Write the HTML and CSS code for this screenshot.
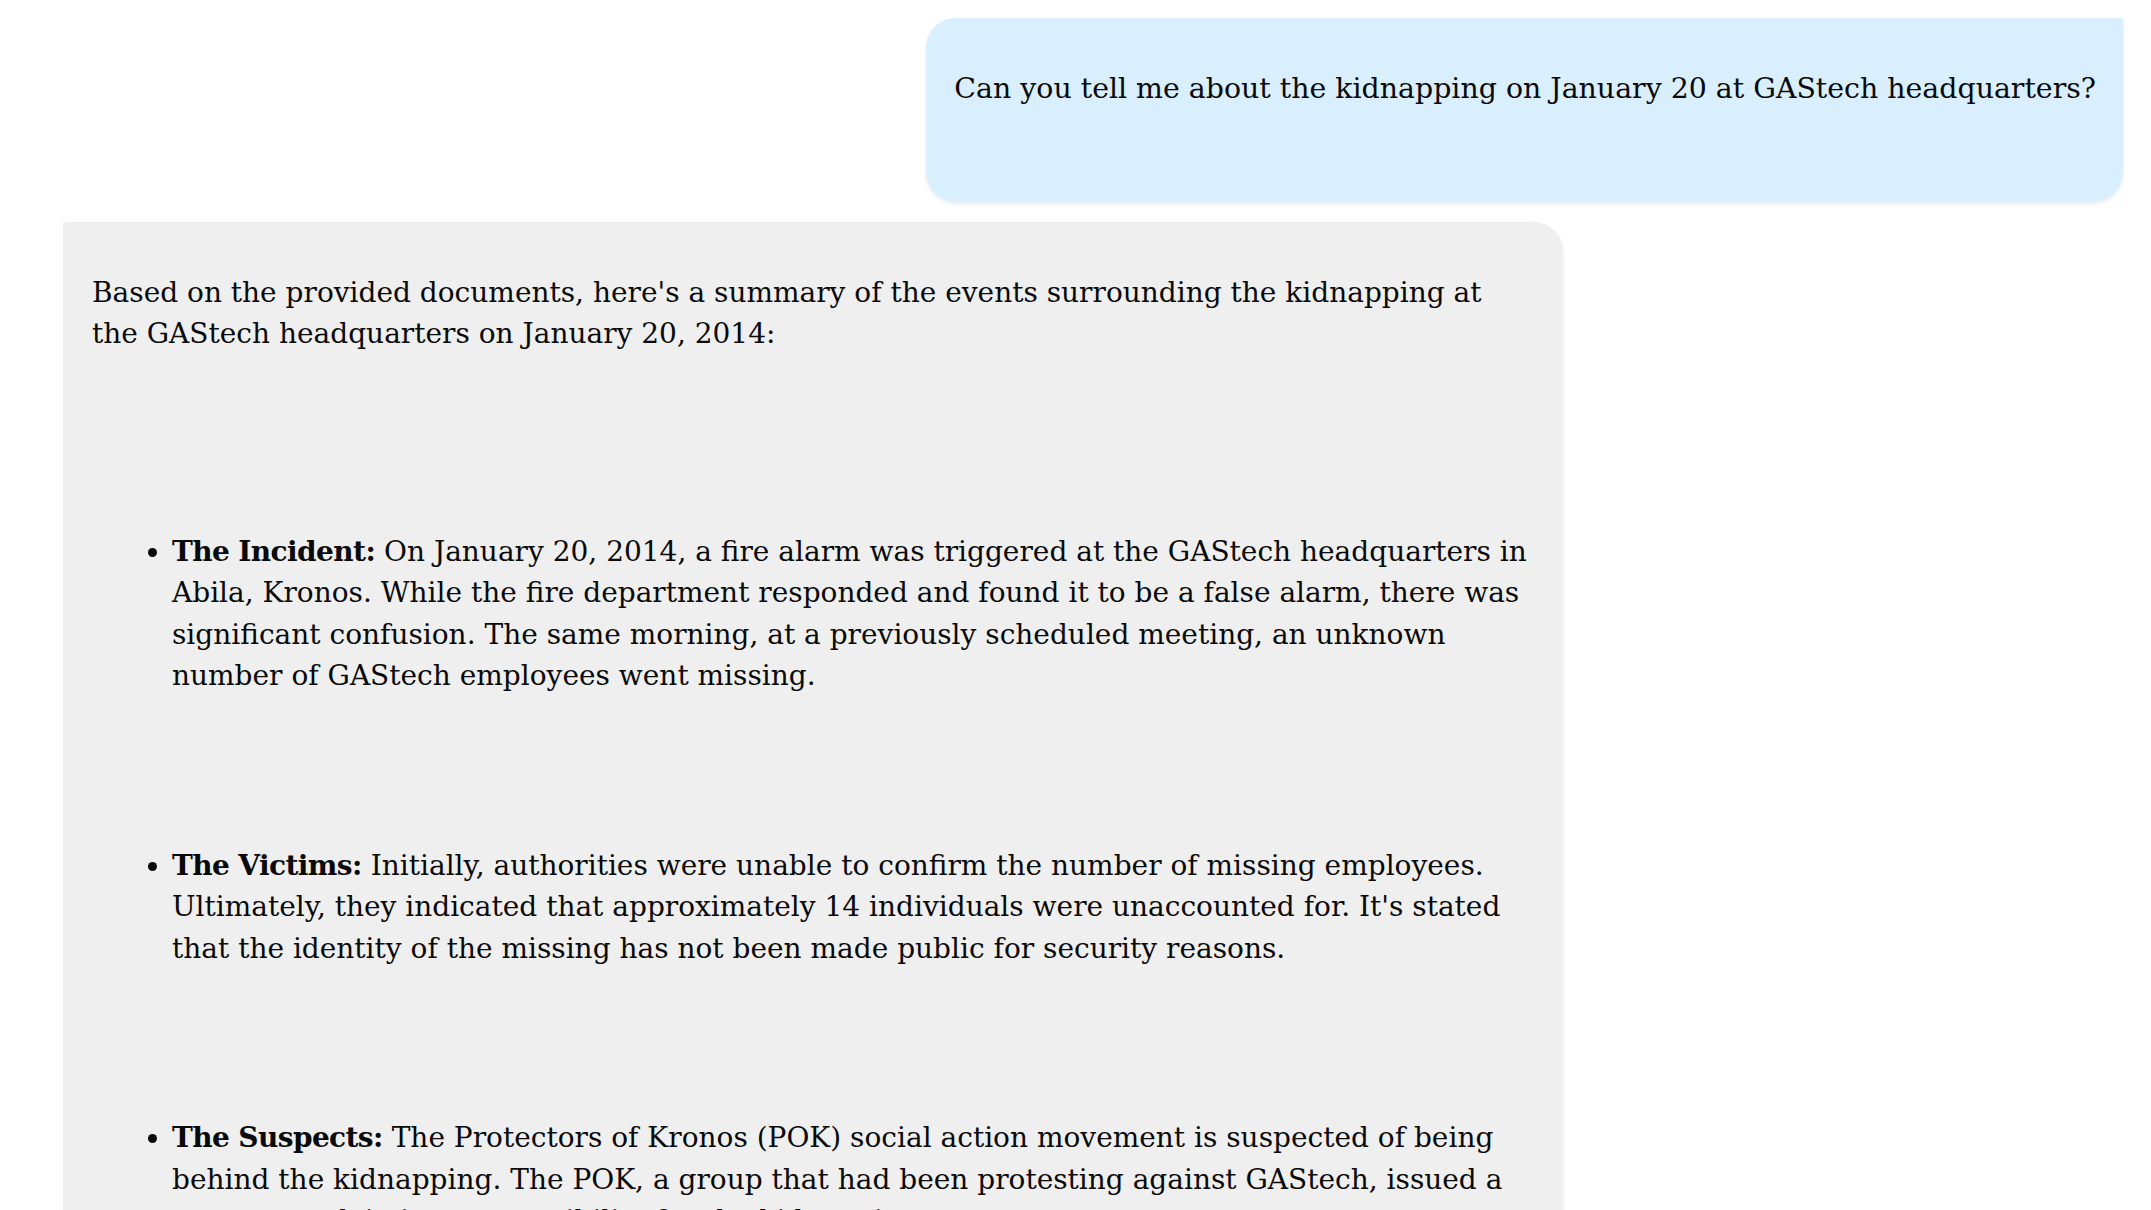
FILE: index.html
```html
<!DOCTYPE html>
<html lang="en">
<head>
<meta charset="utf-8">
<title>Chat</title>
<link rel="stylesheet" href="styles.css">
</head>
<body>
<main class="chat">
  <div class="msg msg-user">
    <p>Can you tell me about the kidnapping on January 20 at GAStech headquarters?</p>
  </div>
  <div class="msg msg-ai">
    <p class="intro">Based on the provided documents, here's a summary of the events surrounding the kidnapping at the GAStech headquarters on January 20, 2014:</p>
    <ul class="points">
      <li><strong>The Incident:</strong> On January 20, 2014, a fire alarm was triggered at the GAStech headquarters in Abila, Kronos. While the fire department responded and found it to be a false alarm, there was significant confusion. The same morning, at a previously scheduled meeting, an unknown number of GAStech employees went missing.</li>
      <li><strong>The Victims:</strong> Initially, authorities were unable to confirm the number of missing employees. Ultimately, they indicated that approximately 14 individuals were unaccounted for. It's stated that the identity of the missing has not been made public for security reasons.</li>
      <li><strong>The Suspects:</strong> The Protectors of Kronos (POK) social action movement is suspected of being behind the kidnapping. The POK, a group that had been protesting against GAStech, issued a statement claiming responsibility for the kidnapping.</li>
    </ul>
  </div>
</main>
</body>
</html>
```
FILE: styles.css
```css
html, body {
  margin: 0;
  background: #ffffff;
}

body {
  font-family: "DejaVu Serif", "Liberation Serif", serif;
  font-size: 28px;
  line-height: 41.5px;
  color: #0a0a0a;
  overflow: hidden;
}

.chat {
  display: flex;
  flex-direction: column;
  gap: 20px;
  padding: 18px 28px 0 63px;
}

.msg p {
  margin: 0;
}

.msg-user {
  align-self: flex-end;
  font-size: 28.4px;
  background: #d9effd;
  border-radius: 30px 0 30px 30px;
  padding: 50px 27px 92px 28px;
  box-shadow: 0 2px 4px rgba(0, 0, 0, 0.08);
  white-space: nowrap;
}

.msg-ai {
  align-self: flex-start;
  box-sizing: border-box;
  width: 1500px;
  background: #efefef;
  border-radius: 0 30px 30px 30px;
  padding: 50px 30px 40px 29px;
  box-shadow: 1px 1px 3px rgba(0, 0, 0, 0.06);
}

.points {
  margin: 176px 0 0;
  padding-left: 80px;
}

.points li + li {
  margin-top: 148px;
}

.points strong {
  font-weight: bold;
  letter-spacing: -0.6px;
}
```
